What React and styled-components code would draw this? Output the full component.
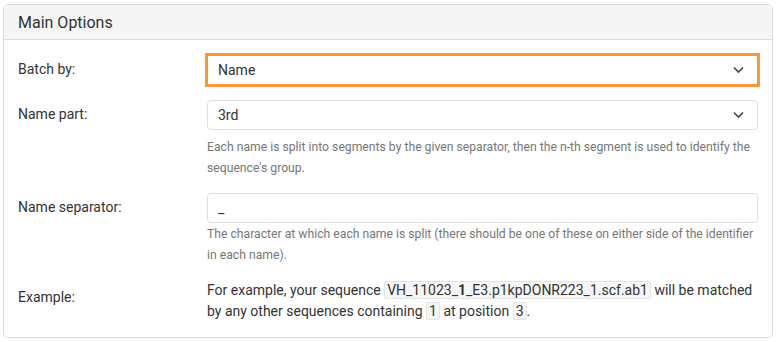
import React from 'react';
import styled, { createGlobalStyle } from 'styled-components';

const GlobalStyle = createGlobalStyle`
  html, body {
    margin: 0;
    padding: 0;
    background: #fff;
  }
  body {
    font-family: Roboto, "Liberation Sans", Arial, sans-serif;
    color: #333;
  }
`;

const Page = styled.div`
  padding: 4px 4px 0 3px;
`;

const Card = styled.section`
  border: 1px solid #dcdcdc;
  border-radius: 5px;
  width: 768px;
  overflow: hidden;
`;

const CardHeader = styled.header`
  background: #f5f5f5;
  border-bottom: 1px solid #dcdcdc;
  height: 34px;
  display: flex;
  align-items: center;
  padding: 0 14px;
  font-size: 16px;
  color: #333;
`;

const CardBody = styled.div`
  padding: 15px 14px 15px 14px;
  display: flex;
  flex-direction: column;
`;

const Row = styled.div`
  display: grid;
  grid-template-columns: 189px 1fr;
  margin-top: ${p => p.$gap || 0}px;
`;

const Label = styled.label`
  font-size: 14px;
  line-height: 21px;
  padding-top: ${p => p.$pad ?? 4}px;
  color: #333;
`;

const Field = styled.div`
  display: flex;
  flex-direction: column;
`;

const SelectWrap = styled.div`
  position: relative;
`;

const Select = styled.select`
  appearance: none;
  width: 100%;
  height: 30px;
  box-sizing: border-box;
  font-family: inherit;
  font-size: 14px;
  color: #333;
  background: #fff;
  padding: 0 30px 0 10px;
  border: 1px solid ${p => (p.$focused ? '#f7962f' : '#dedede')};
  border-radius: ${p => (p.$focused ? 0 : 4)}px;
  box-shadow: ${p => (p.$focused ? '0 0 0 2px #fb9a38' : 'none')};
  outline: none;
`;

const Chevron = styled.svg`
  position: absolute;
  right: 14px;
  top: 50%;
  transform: translateY(-50%);
  pointer-events: none;
`;

const Input = styled.input`
  width: 100%;
  height: 30px;
  box-sizing: border-box;
  font-family: inherit;
  font-size: 14px;
  color: #333;
  padding: 0 10px;
  border: 1px solid #dedede;
  border-radius: 4px;
  outline: none;
`;

const Help = styled.p`
  margin: ${p => p.$top || 4}px 0 0;
  font-size: 12.2px;
  line-height: 21px;
  color: #777;
`;

const Text = styled.p`
  margin: 0;
  font-size: 14px;
  line-height: 21px;
  color: #333;
`;

const Code = styled.span`
  background: #f6f6f6;
  border: 1px solid #e4e4e4;
  border-radius: 2px;
  padding: 0 2px;
`;

const ChevronIcon = () => (
  <Chevron width="11" height="7" viewBox="0 0 11 7">
    <path d="M1 1l4.5 4.5L10 1" fill="none" stroke="#444" strokeWidth="1.6" />
  </Chevron>
);

const App = () => (
  <>
    <GlobalStyle />
    <Page>
      <Card>
        <CardHeader>Main Options</CardHeader>
        <CardBody>
          <Row>
            <Label>Batch by:</Label>
            <SelectWrap>
              <Select $focused defaultValue="name">
                <option value="name">Name</option>
                <option value="plate">Plate</option>
              </Select>
              <ChevronIcon />
            </SelectWrap>
          </Row>

          <Row $gap={15}>
            <Label>Name part:</Label>
            <Field>
              <SelectWrap>
                <Select defaultValue="3">
                  <option value="1">1st</option>
                  <option value="2">2nd</option>
                  <option value="3">3rd</option>
                </Select>
                <ChevronIcon />
              </SelectWrap>
              <Help $top={7}>
                Each name is split into segments by the given separator, then the n-th segment is used to identify the
                sequence's group.
              </Help>
            </Field>
          </Row>

          <Row $gap={14}>
            <Label>Name separator:</Label>
            <Field>
              <Input defaultValue="_" />
              <Help $top={1}>
                The character at which each name is split (there should be one of these on either side of the identifier
                in each name).
              </Help>
            </Field>
          </Row>

          <Row $gap={14}>
            <Label $pad={7}>Example:</Label>
            <Text>
              For example, your sequence <Code>VH_11023_<b>1</b>_E3.p1kpDONR223_1.scf.ab1</Code> will be matched
              by any other sequences containing <Code>1</Code> at position <Code>3</Code>.
            </Text>
          </Row>
        </CardBody>
      </Card>
    </Page>
  </>
);

export default App;
